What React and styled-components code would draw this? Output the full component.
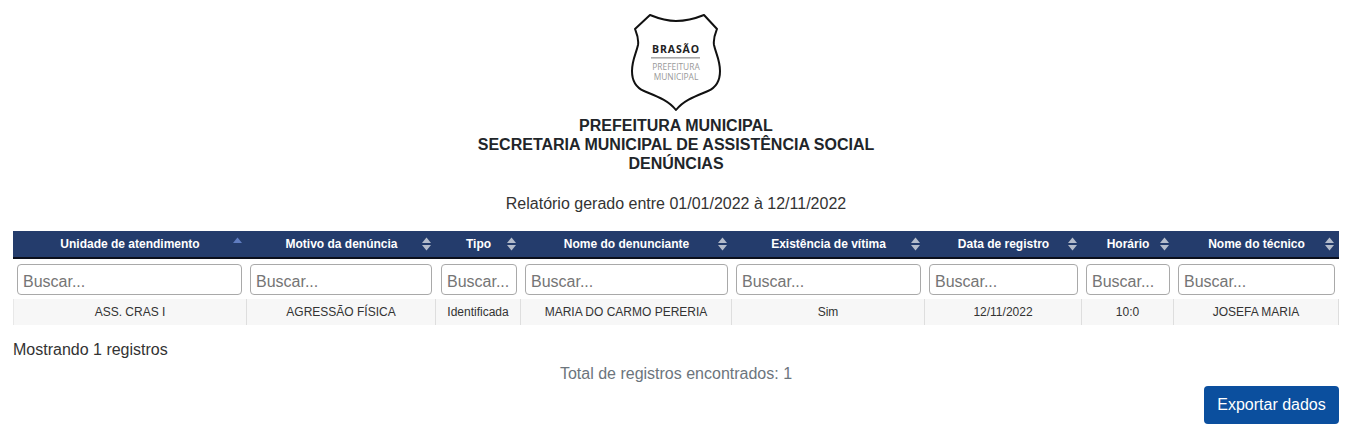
import React from 'react';
import styled, { createGlobalStyle } from 'styled-components';

const GlobalStyle = createGlobalStyle`
  body {
    margin: 0;
    background: #fff;
    color: #333;
    font-family: "Liberation Sans", Arial, sans-serif;
  }
`;

const Page = styled.div`
  padding: 14px 12px 20px 13px;
  display: flex;
  flex-direction: column;
`;

const Header = styled.header`
  display: flex;
  flex-direction: column;
  align-items: center;
`;

const Crest = styled.svg`
  display: block;
  width: 92px;
  height: 98px;
  margin-bottom: 4px;
`;

const Title = styled.h1`
  margin: 0;
  font-size: 16px;
  line-height: 19px;
  font-weight: 700;
  text-align: center;
  color: #212529;
`;

const Period = styled.p`
  margin: 21px 0 18px;
  font-size: 16px;
  line-height: 19px;
  text-align: center;
`;

const Table = styled.table`
  width: 1326px;
  table-layout: fixed;
  border-collapse: separate;
  border-spacing: 0;
`;

const HeadCell = styled.th`
  position: relative;
  height: 26px;
  padding: 0;
  background: #243c6c;
  border-bottom: 2px solid #0b0f1c;
  color: #fff;
  font-size: 12px;
  font-weight: 700;
  text-align: center;
`;

const Sort = styled.svg`
  position: absolute;
  right: 5px;
  top: 6px;
  width: 9px;
  height: 14px;
`;

const FilterCell = styled.td`
  padding: 5px 4px 4px 4px;
  &:first-child {
    padding-right: 5px;
  }
  &:nth-child(2) {
    padding-left: 3px;
  }
  &:nth-child(3) {
    padding-left: 5px;
  }
`;

const Search = styled.input`
  display: block;
  width: 100%;
  height: 31px;
  box-sizing: border-box;
  padding: 4px 5px 0;
  border: 1px solid #a9a9a9;
  border-radius: 4px;
  background: #fff;
  font-family: inherit;
  font-size: 16px;
  &::placeholder {
    color: #757575;
    opacity: 1;
  }
`;

const DataCell = styled.td`
  height: 26px;
  padding: 0;
  background: #f7f7f7;
  border-right: 1px solid #dedede;
  border-left: ${(p) => (p.$first ? '1px solid #e8e8e8' : 'none')};
  font-size: 12px;
  text-align: center;
  color: #333;
`;

const Count = styled.div`
  margin-top: 15px;
  font-size: 16px;
  line-height: 19px;
`;

const Total = styled.div`
  margin-top: 5px;
  font-size: 16px;
  line-height: 19px;
  text-align: center;
  color: #6c757d;
`;

const Actions = styled.div`
  display: flex;
  justify-content: flex-end;
  margin-top: 3px;
`;

const Button = styled.button`
  width: 135px;
  height: 38px;
  border: none;
  border-radius: 4px;
  background: #0b4f9e;
  color: #fff;
  font-family: inherit;
  font-size: 16px;
  cursor: pointer;
`;

const columns = [
  { width: 234, label: 'Unidade de atendimento', value: 'ASS. CRAS I', sorted: true },
  { width: 189, label: 'Motivo da denúncia', value: 'AGRESSÃO FÍSICA' },
  { width: 85, label: 'Tipo', value: 'Identificada' },
  { width: 211, label: 'Nome do denunciante', value: 'MARIA DO CARMO PERERIA' },
  { width: 193, label: 'Existência de vítima', value: 'Sim' },
  { width: 157, label: 'Data de registro', value: '12/11/2022' },
  { width: 92, label: 'Horário', value: '10:0' },
  { width: 165, label: 'Nome do técnico', value: 'JOSEFA MARIA' },
];

const SortIcon = ({ sorted }) => (
  <Sort viewBox="0 0 9 14">
    <path d="M4.5 0.5 L9 6 H0 Z" fill={sorted ? '#5f7cc0' : '#b4bccb'} />
    {!sorted && <path d="M0 8 H9 L4.5 13.5 Z" fill="#b4bccb" />}
  </Sort>
);

const App = () => (
  <>
    <GlobalStyle />
    <Page>
      <Header>
        <Crest viewBox="0 0 92 98">
          <path
            d="M20 1 C30 5 38 7 46 7 C54 7 64 5 74 1 L87 15 C85 20 83 24 84 31 C86 40 90 46 90 57 C90 68 85 74 78 77 C66 82 54 86 46 96 C38 86 26 82 14 77 C7 74 2 68 2 57 C2 46 6 40 8 31 C9 24 7 20 5 15 Z"
            fill="#fff"
            stroke="#111"
            strokeWidth="2"
            strokeLinejoin="round"
          />
          <text x="46" y="39" textAnchor="middle" fontFamily="Open Sans, sans-serif" fontWeight="700" fontSize="10.5" letterSpacing="0.9" fill="#222">
            BRASÃO
          </text>
          <rect x="21" y="43" width="49" height="1.6" fill="#aaa" />
          <text x="46" y="56" textAnchor="middle" fontFamily="Open Sans, sans-serif" fontSize="8.4" fill="#999">
            PREFEITURA
          </text>
          <text x="46" y="66" textAnchor="middle" fontFamily="Open Sans, sans-serif" fontSize="8.4" fill="#999">
            MUNICIPAL
          </text>
        </Crest>
        <Title>PREFEITURA MUNICIPAL</Title>
        <Title>SECRETARIA MUNICIPAL DE ASSISTÊNCIA SOCIAL</Title>
        <Title>DENÚNCIAS</Title>
        <Period>Relatório gerado entre 01/01/2022 à 12/11/2022</Period>
      </Header>
      <Table>
        <colgroup>
          {columns.map((c) => (
            <col key={c.label} style={{ width: c.width }} />
          ))}
        </colgroup>
        <thead>
          <tr>
            {columns.map((c) => (
              <HeadCell key={c.label}>
                {c.label}
                <SortIcon sorted={c.sorted} />
              </HeadCell>
            ))}
          </tr>
          <tr>
            {columns.map((c) => (
              <FilterCell key={c.label}>
                <Search placeholder="Buscar..." />
              </FilterCell>
            ))}
          </tr>
        </thead>
        <tbody>
          <tr>
            {columns.map((c, i) => (
              <DataCell key={c.label} $first={i === 0}>
                {c.value}
              </DataCell>
            ))}
          </tr>
        </tbody>
      </Table>
      <Count>Mostrando 1 registros</Count>
      <Total>Total de registros encontrados: 1</Total>
      <Actions>
        <Button>Exportar dados</Button>
      </Actions>
    </Page>
  </>
);

export default App;
